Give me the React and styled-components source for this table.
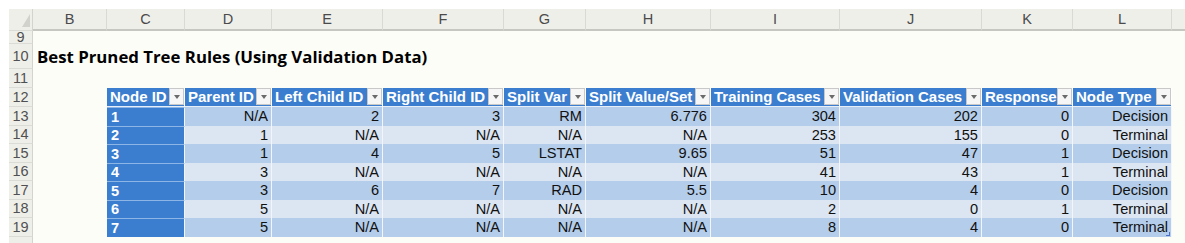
import React from "react"
import styled, { createGlobalStyle } from "styled-components"

const GlobalStyle = createGlobalStyle`
  html, body {
    margin: 0;
    padding: 0;
    background: #ffffff;
  }
  body {
    font-family: "Liberation Sans", Arial, sans-serif;
  }
`

// sheet columns B..L plus the cut-off M on the right edge
const columns = [
  { id: "B", w: 74 },
  { id: "C", w: 78 },
  { id: "D", w: 87 },
  { id: "E", w: 111 },
  { id: "F", w: 121 },
  { id: "G", w: 82 },
  { id: "H", w: 125 },
  { id: "I", w: 129 },
  { id: "J", w: 142 },
  { id: "K", w: 91 },
  { id: "L", w: 99 },
  { id: "", w: 40 },
]

const headers = [
  "Node ID",
  "Parent ID",
  "Left Child ID",
  "Right Child ID",
  "Split Var",
  "Split Value/Set",
  "Training Cases",
  "Validation Cases",
  "Response",
  "Node Type",
]

const rules = [
  ["1", "N/A", "2", "3", "RM", "6.776", "304", "202", "0", "Decision"],
  ["2", "1", "N/A", "N/A", "N/A", "N/A", "253", "155", "0", "Terminal"],
  ["3", "1", "4", "5", "LSTAT", "9.65", "51", "47", "1", "Decision"],
  ["4", "3", "N/A", "N/A", "N/A", "N/A", "41", "43", "1", "Terminal"],
  ["5", "3", "6", "7", "RAD", "5.5", "10", "4", "0", "Decision"],
  ["6", "5", "N/A", "N/A", "N/A", "N/A", "2", "0", "1", "Terminal"],
  ["7", "5", "N/A", "N/A", "N/A", "N/A", "8", "4", "0", "Terminal"],
]

const Frame = styled.div`
  width: 1185px;
  height: 243px;
  box-sizing: border-box;
  padding: 9px 0 0 9px;
  overflow: hidden;
  background: #ffffff;
`

const Sheet = styled.div`
  background: #fdfdf8;
  height: 100%;
`

const Row = styled.div`
  display: flex;
  height: ${(p) => p.$h}px;
`

const RowNum = styled.div`
  flex: none;
  width: 24px;
  box-sizing: border-box;
  background: #efefea;
  border-bottom: 1px solid #dcdcd6;
  border-right: 1px solid #d4d4ce;
  display: flex;
  align-items: center;
  justify-content: center;
  font-size: 14.5px;
  color: #505050;
  position: relative;
`

const ColHeader = styled.div`
  flex: none;
  width: ${(p) => p.$w}px;
  box-sizing: border-box;
  background: #efefea;
  border-right: 1px solid #dadad4;
  border-bottom: 2px solid #c6c7c1;
  display: flex;
  align-items: center;
  justify-content: center;
  font-size: 14.5px;
  color: #4a4a4a;
`

const Corner = styled.svg`
  position: absolute;
  right: 2px;
  bottom: 3px;
`

const Title = styled.div`
  padding-left: 4px;
  display: flex;
  align-items: center;
  font-family: "Open Sans", "Liberation Sans", sans-serif;
  font-weight: 700;
  font-size: 16.8px;
  color: #000000;
  white-space: nowrap;
`

const Blank = styled.div`
  flex: none;
  width: ${(p) => p.$w}px;
`

const HeadCell = styled.div`
  flex: none;
  width: ${(p) => p.$w}px;
  box-sizing: border-box;
  display: flex;
  align-items: flex-start;
  background: #3b7ecf;
  border-right: 1px solid #ffffff;
  border-bottom: 1px solid #e6eef8;
  color: #ffffff;
  font-weight: 700;
  font-size: 15px;
`

const HeadLabel = styled.span`
  flex: 1;
  min-width: 0;
  overflow: hidden;
  white-space: nowrap;
  padding-left: 3px;
  line-height: 18px;
`

const Dropdown = styled.span`
  flex: none;
  width: 15px;
  height: 17px;
  box-sizing: border-box;
  background: #f6f6f6;
  border: 1px solid #c8c8c8;
  display: flex;
  align-items: center;
  justify-content: center;

  &::after {
    content: "";
    width: 0;
    height: 0;
    border-left: 3.5px solid transparent;
    border-right: 3.5px solid transparent;
    border-top: 4px solid #6a6a6a;
  }
`

const Cell = styled.div`
  flex: none;
  width: ${(p) => p.$w}px;
  box-sizing: border-box;
  display: flex;
  align-items: center;
  justify-content: flex-end;
  padding-right: 3px;
  background: ${(p) => (p.$dark ? "#b4cdea" : "#dce6f2")};
  border-right: 1px solid #f2f6fb;
  color: #111111;
  font-size: 14.6px;
  white-space: nowrap;
  position: relative;
`

const IdCell = styled(Cell)`
  justify-content: flex-start;
  padding: 0 0 0 4px;
  background: #3b7ecf;
  border-top: 1px solid #8db5e6;
  color: #ffffff;
  font-weight: 700;
`

const ResizeHandle = styled.span`
  position: absolute;
  right: 1px;
  bottom: 1px;
  width: 3px;
  height: 3px;
  border-right: 1px solid #4a6fc4;
  border-bottom: 1px solid #4a6fc4;
`

const tableCols = columns.slice(1, 11)

function HeaderRow() {
  return (
    <Row $h={19}>
      <RowNum>12</RowNum>
      <Blank $w={columns[0].w} />
      {headers.map((h, i) => (
        <HeadCell key={h} $w={tableCols[i].w}>
          <HeadLabel>{h}</HeadLabel>
          <Dropdown />
        </HeadCell>
      ))}
    </Row>
  )
}

function RuleRow({ num, values, dark, last }) {
  return (
    <Row $h={18.5}>
      <RowNum>{num}</RowNum>
      <Blank $w={columns[0].w} />
      {values.map((v, i) =>
        i === 0 ? (
          <IdCell key={i} $w={tableCols[i].w}>{v}</IdCell>
        ) : (
          <Cell key={i} $w={tableCols[i].w} $dark={dark}>
            {v}
            {last && i === values.length - 1 && <ResizeHandle />}
          </Cell>
        )
      )}
    </Row>
  )
}

export default function App() {
  return (
    <>
      <GlobalStyle />
      <Frame>
        <Sheet>
          <Row $h={22}>
            <RowNum>
              <Corner width="8" height="13" viewBox="0 0 8 13">
                <polygon points="8,0 8,13 0,13" fill="#d2d2cd" />
              </Corner>
            </RowNum>
            {columns.map((c) => (
              <ColHeader key={c.id || "m"} $w={c.w}>{c.id}</ColHeader>
            ))}
          </Row>
          <Row $h={13}>
            <RowNum>9</RowNum>
          </Row>
          <Row $h={25}>
            <RowNum>10</RowNum>
            <Title>Best Pruned Tree Rules (Using Validation Data)</Title>
          </Row>
          <Row $h={19}>
            <RowNum>11</RowNum>
          </Row>
          <HeaderRow />
          {rules.map((r, i) => (
            <RuleRow
              key={r[0]}
              num={13 + i}
              values={r}
              dark={i % 2 === 0}
              last={i === rules.length - 1}
            />
          ))}
          <Row $h={12}>
            <RowNum />
          </Row>
        </Sheet>
      </Frame>
    </>
  )
}
